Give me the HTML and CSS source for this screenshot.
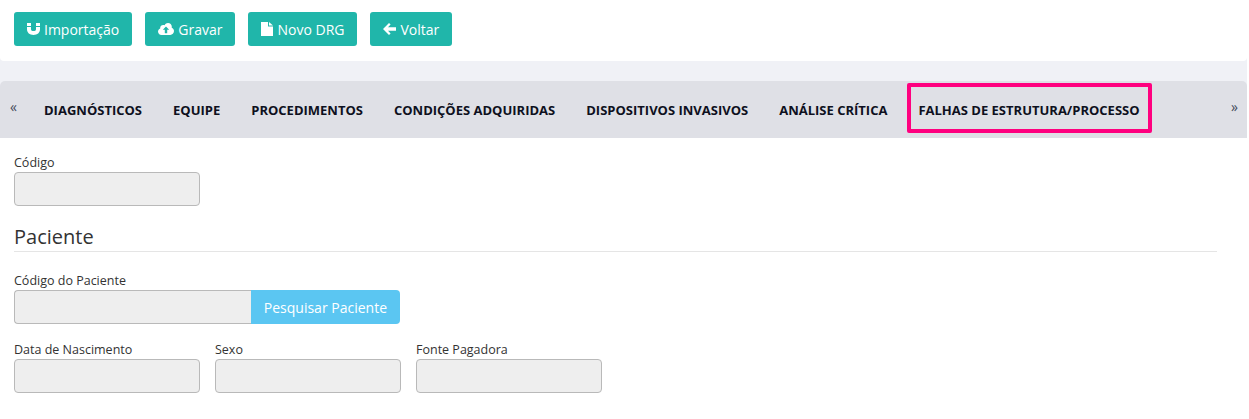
FILE: index.html
```html
<!DOCTYPE html>
<html lang="pt-BR">

<head>
  <meta charset="utf-8">
  <title>DRG</title>
  <link rel="stylesheet" href="styles.css">
</head>

<body>
  <div class="page">
    <div class="toolbar">
      <a href="#" class="btn">
        <svg class="ico ico-magnet" viewBox="0 0 13 12"><path d="M0 0h4v3H0zM9 0h4v3H9zM0 4h4v2.2c0 1.2 1 1.9 2.5 1.9S9 7.400 9 6.200V4h4v2.300C13 9.800 10.300 12 6.500 12S0 9.800 0 6.300z" /></svg>
        Importação
      </a>
      <a href="#" class="btn">
        <svg class="ico ico-cloud" viewBox="0 0 16 12"><path fill-rule="evenodd" d="M3.500 12C1.500 12 0 10.500 0 8.600c0-1.500.9-2.700 2.200-3.200C2.200 5.200 2.200 5 2.200 4.800 2.200 3.100 3.500 1.900 5.200 1.900c.5 0 1 .1 1.400.4C7.300 .9 8.600 0 10 0c2.100 0 3.800 1.700 3.800 3.800 0 .3 0 .6-.1.9C15 5.200 16 6.500 16 8.100 16 10.300 14.300 12 12.300 12zM8 3.500 4.800 6.800h2v3.400h2.400V6.800h2z" /></svg>
        Gravar
      </a>
      <a href="#" class="btn">
        <svg class="ico ico-file" viewBox="0 0 12 14"><path d="M0 0h7v4.500h5V14H0zM8 0l4 3.500H8z" /></svg>
        Novo DRG
      </a>
      <a href="#" class="btn">
        <svg class="ico ico-arrow" viewBox="0 0 13 12"><path d="M6 0l1.600 1.600L5 4.300h8v3.400H5l2.600 2.700L6 12 0 6z" /></svg>
        Voltar
      </a>
    </div>

    <div class="tabbar">
      <span class="tab-arrow">«</span>
      <ul class="tabs">
        <li>Diagnósticos</li>
        <li>Equipe</li>
        <li>Procedimentos</li>
        <li>Condições Adquiridas</li>
        <li>Dispositivos Invasivos</li>
        <li>Análise Crítica</li>
        <li class="tab-marked">Falhas de Estrutura/Processo</li>
      </ul>
      <span class="tab-arrow tab-arrow-right">»</span>
    </div>

    <form class="content">
      <div class="row">
        <div class="field">
          <label>Código</label>
          <div class="input"></div>
        </div>
      </div>

      <h3 class="section-title">Paciente</h3>

      <div class="field field-search">
        <label>Código do Paciente</label>
        <div class="input-group">
          <div class="input"></div>
          <a href="#" class="btn-search">Pesquisar Paciente</a>
        </div>
      </div>

      <div class="row">
        <div class="field">
          <label>Data de Nascimento</label>
          <div class="input"></div>
        </div>
        <div class="field">
          <label>Sexo</label>
          <div class="input"></div>
        </div>
        <div class="field">
          <label>Fonte Pagadora</label>
          <div class="input"></div>
        </div>
      </div>
    </form>
  </div>
</body>

</html>
```

FILE: styles.css
```css
html,
body {
  margin: 0;
  height: 100%;
  overflow: hidden;
  background: #ffffff;
}

body {
  color: #333333;
  font-family: "Open Sans", sans-serif;
  font-size: 13px;
}

.page {
  width: 1247px;
  height: 419px;
  background: #f0f1f6;
}

.toolbar {
  display: flex;
  gap: 13px;
  height: 61px;
  box-sizing: border-box;
  padding: 12px 14px 0 14px;
  background: #ffffff;
  border-radius: 0 0 4px 4px;
}

.btn {
  display: flex;
  align-items: center;
  height: 34px;
  box-sizing: border-box;
  padding: 0 13px;
  background: #20b6aa;
  border-radius: 3px;
  color: #ffffff;
  font-size: 14px;
  text-decoration: none;
  white-space: nowrap;
}

.ico {
  fill: #ffffff;
  margin-right: 4px;
}

.ico-magnet {
  width: 13px;
  height: 12px;
}

.ico-cloud {
  width: 16px;
  height: 12px;
}

.ico-file {
  width: 12px;
  height: 14px;
}

.ico-arrow {
  width: 13px;
  height: 12px;
}

.tabbar {
  display: flex;
  align-items: center;
  height: 57px;
  margin-top: 20px;
  background: #dfe0e6;
  border-radius: 5px 5px 0 0;
}

.tab-arrow {
  width: 29px;
  box-sizing: border-box;
  padding: 0 0 6px 10px;
  font-size: 14px;
  color: #444b5a;
}

.tab-arrow-right {
  margin-left: auto;
  width: 25px;
  padding-left: 9px;
}

.tabs {
  display: flex;
  gap: 31px;
  margin: 0 0 0 15px;
  padding: 0;
  list-style: none;
}

.tabs li {
  color: #0e1020;
  font-size: 13px;
  font-weight: 700;
  text-transform: uppercase;
  white-space: nowrap;
}

.tab-marked {
  position: relative;
}

.tab-marked::after {
  content: "";
  position: absolute;
  top: -18px;
  right: -12px;
  bottom: -14px;
  left: -11px;
  border: 4px solid #ff007f;
  border-radius: 2px;
}

.content {
  height: 281px;
  box-sizing: border-box;
  padding: 16px 30px 0 14px;
  background: #ffffff;
}

.row {
  display: flex;
  gap: 15px;
}

.field {
  width: 186px;
}

.field label {
  display: block;
  height: 18px;
  line-height: 18px;
  color: #333333;
  font-size: 12.500px;
}

.input {
  height: 34px;
  box-sizing: border-box;
  background: #eeeeee;
  border: 1px solid #b9b9b9;
  border-radius: 4px;
}

.section-title {
  margin: 17px 0 20px 0;
  padding-bottom: 1px;
  border-bottom: 1px solid #e5e5e5;
  color: #333333;
  font-size: 20px;
  font-weight: 400;
  line-height: 27px;
}

.field-search {
  width: 386px;
  margin-bottom: 17px;
}

.input-group {
  display: flex;
}

.input-group .input {
  flex: 1;
  border-right: 0;
  border-radius: 4px 0 0 4px;
}

.btn-search {
  display: flex;
  align-items: center;
  height: 34px;
  box-sizing: border-box;
  padding: 0 13px;
  background: #5bc6f2;
  border-radius: 0 4px 4px 0;
  color: #ffffff;
  font-size: 14px;
  text-decoration: none;
}
```
